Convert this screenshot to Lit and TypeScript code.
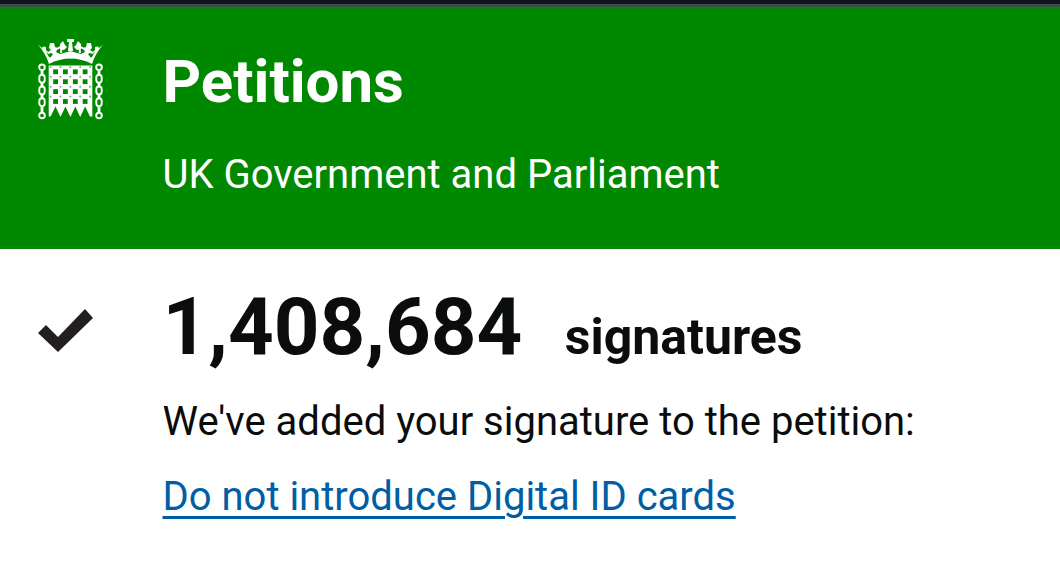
import { css, html, LitElement, svg } from 'lit';
import { customElement } from 'lit/decorators.js';

@customElement('portcullis-logo')
export class PortcullisLogo extends LitElement {
  static styles = css`
    :host {
      display: block;
    }

    svg {
      display: block;
    }

    .solid {
      fill: #ffffff;
    }

    .hole {
      fill: #008800;
    }

    .rivet {
      fill: #66b866;
    }

    .ray {
      fill: none;
      stroke: #ffffff;
      stroke-width: 2;
    }

    .link {
      fill: none;
      stroke: #ffffff;
      stroke-width: 1.9;
    }

    .joint {
      stroke: #ffffff;
      stroke-width: 2.8;
    }
  `;

  _renderHalfCrown() {
    return svg`
      <path class="solid" d="M0 5.5L4 9L5 7.5L8 8L8 11L10 13L13 11L11 9L12 4L16 4L17 8L20 9L18 13L22 15L33 12V19.5Q21 19.5 11 25Q8 15 0 5.5Z" />
      <path class="hole" d="M8 12.5L10.5 15L13 14L15 15L12.5 18.5L11 18Z" />
      <path class="ray" d="M13 6L17 15M19 10L24 7M24 4L23 14" />
      <path class="solid" d="M22 5L25 2L27 6L29 8L26 11L22 10Z" />
    `;
  }

  _renderGrid() {
    const columns = [15.2, 25, 34.9, 44.7];
    const rows = [30.4, 40.3, 50.2, 60.1];
    const rivets = [12.6, 22.5, 32.4, 42.2, 52];
    return svg`
      ${rows.map((y) => columns.map((x) => svg`<rect class="hole" x=${x} y=${y} width="4.8" height="4.8" />`))}
      ${rows.map((y) => rivets.map((x) => svg`<circle class="rivet" cx=${x} cy=${y - 2.5} r="1" />`))}
    `;
  }

  _renderChain(x: number) {
    return svg`
      <circle class="link" cx=${x} cy="28.3" r="2.8" />
      ${[35.8, 47.5, 59.2].map((y) => svg`
        <path class="joint" d="M${x} ${y - 4.5}V${y + 0.5}" />
        <rect class="link" x=${x - 2.7} y=${y} width="5.4" height="8" rx="2.7" />
      `)}
      <path class="joint" d="M${x} 67V74" />
      <circle class="link" cx=${x} cy="76.5" r="2.8" />
    `;
  }

  render() {
    return html`
      <svg width="66" height="82" viewBox="0 0 66 82">
        ${this._renderHalfCrown()}
        <g transform="translate(65 0) scale(-1 1)">${this._renderHalfCrown()}</g>
        <path class="solid" d="M29 0H36V3H34L35 12H30L31 3H29Z" />
        <path class="solid" d="M10.7 26.5H54.3V77.5H52L47.1 67.5L42.2 78L37.3 67.5L32.4 78L27.4 67.5L22.5 78L17.5 67.5L12.6 77.5H10.7Z" />
        ${this._renderGrid()}
        ${this._renderChain(4)}
        ${this._renderChain(61)}
      </svg>
    `;
  }
}

@customElement('app-root')
export class AppRoot extends LitElement {
  static styles = css`
    :host {
      display: block;
      height: 585px;
      overflow: hidden;
      background-color: #ffffff;
      color: #0b0c0c;
      font-family: Roboto, sans-serif;
    }

    .status-bar {
      height: 4px;
      border-bottom: 3px solid #3b4b45;
      background-color: #0f141d;
    }

    header {
      display: grid;
      grid-template-columns: 124.5px 1fr;
      box-sizing: border-box;
      height: 242px;
      padding: 32px 38px 0;
      background-color: #008800;
      color: #ffffff;
    }

    main {
      display: grid;
      grid-template-columns: 124.5px 1fr;
      padding: 32px 38px 0;
    }

    h1 {
      margin: 8px 0 0;
      font-size: 60px;
      line-height: 70px;
    }

    p {
      margin: 0;
      font-size: 40px;
      line-height: 48px;
      white-space: nowrap;
    }

    .tagline {
      margin-top: 34px;
    }

    .tick {
      margin-top: 28px;
    }

    .count {
      display: flex;
      align-items: baseline;
      gap: 42.5px;
      font-size: 79.8px;
      font-weight: 700;
      line-height: 92px;
    }

    .count small {
      font-size: 50px;
    }

    .message {
      margin-top: 15px;
    }

    .petition {
      margin-top: 27px;
    }

    a {
      color: #005ea5;
      text-decoration-thickness: 3px;
      text-underline-offset: 6px;
    }
  `;

  render() {
    return html`
      <div class="status-bar"></div>
      <header>
        <portcullis-logo></portcullis-logo>
        <div>
          <h1>Petitions</h1>
          <p class="tagline">UK Government and Parliament</p>
        </div>
      </header>
      <main>
        <svg class="tick" width="56" height="44" viewBox="0 0 56 44"><path d="M0 24L8 16L20 28L47 0L55 9L20 43Z" fill="#231f20" /></svg>
        <div>
          <div class="count"><span>1,408,684</span><small>signatures</small></div>
          <p class="message">We've added your signature to the petition:</p>
          <p class="petition"><a href="#">Do not introduce Digital ID cards</a></p>
        </div>
      </main>
    `;
  }
}
